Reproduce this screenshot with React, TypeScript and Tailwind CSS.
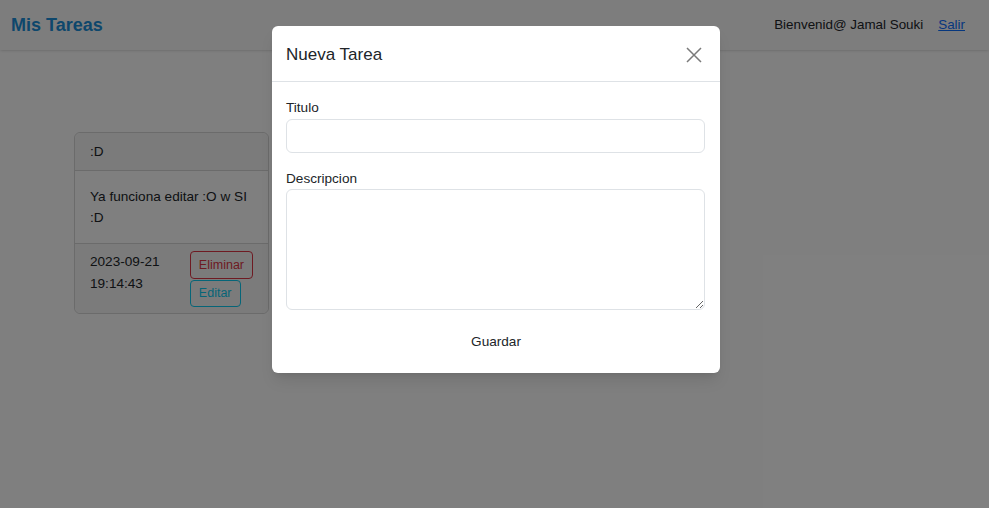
import React, { useState } from 'react';

const font = { fontFamily: '"Liberation Sans", Arial, sans-serif' };

const TaskCard: React.FC = () => (
  <div className="w-[195px] rounded-[6px] border border-[#d6d6d6] bg-white text-[13.6px] leading-[21px] text-[#212529]">
    <div className="h-[38px] px-[15px] flex items-center bg-[#f7f7f7] border-b border-[#d6d6d6] rounded-t-[6px]">:D</div>
    <div className="px-[15px] py-[15px] border-b border-[#d6d6d6]">Ya funciona editar :O w SI :D</div>
    <div className="flex px-[15px] pt-[7px] pb-[6px] bg-[#f7f7f7] rounded-b-[6px]">
      <div className="flex-1 leading-[22px]">2023-09-21 19:14:43</div>
      <div className="flex flex-col items-start shrink-0">
        <button className="h-[28px] px-[8px] rounded-[4px] border border-[#dc3545] text-[#dc3545] text-[12.5px] leading-none">Eliminar</button>
        <button className="mt-[1px] h-[27px] px-[8px] rounded-[4px] border border-[#0dcaf0] text-[#0dcaf0] text-[12.5px] leading-none">Editar</button>
      </div>
    </div>
  </div>
);

export default function App() {
  const [titulo, setTitulo] = useState('');
  const [descripcion, setDescripcion] = useState('');

  return (
    <div className="relative w-[989px] h-[508px] overflow-hidden bg-white" style={font}>
      {/* Navbar */}
      <div className="h-[50px] flex items-center justify-between pl-[11px] pr-[24px] bg-[#fbfbfb] shadow-sm">
        <span className="text-[18px] font-bold text-[#1c8fd8]">Mis Tareas</span>
        <div className="flex items-center gap-[15px] text-[13.4px] text-[#212529]">
          <span>Bienvenid@ Jamal Souki</span>
          <a href="#" className="text-[#0d6efd] underline">Salir</a>
        </div>
      </div>

      {/* Tasks */}
      <div className="pt-[82px] pl-[74px]">
        <TaskCard />
      </div>

      {/* Backdrop */}
      <div className="absolute inset-0 bg-black/50" />

      {/* Modal */}
      <div className="absolute left-[272px] top-[26px] w-[448px] bg-white rounded-[6px] shadow-lg text-[#212529]">
        <div className="h-[56px] flex items-center justify-between px-[14px] pt-[2px] border-b border-[#dee2e6]">
          <h2 className="text-[17px] leading-none">Nueva Tarea</h2>
          <button className="w-[20px] h-[20px] flex items-center justify-center mr-[2px] text-[#7a7a7a]">
            <svg width="16" height="16" viewBox="0 0 16 16" fill="none" stroke="currentColor" strokeWidth="1.5">
              <path d="M1 1 L15 15 M15 1 L1 15" />
            </svg>
          </button>
        </div>
        <div className="px-[14px] pt-[16px] pb-[14px] flex flex-col text-[13.6px]">
          <label className="leading-[20px] mb-[1px]">Titulo</label>
          <input
            value={titulo}
            onChange={e => setTitulo(e.target.value)}
            className="w-[419px] h-[34px] rounded-[6px] border border-[#dee2e6] px-[10px] outline-none"
          />
          <label className="mt-[16px] leading-[20px]">Descripcion</label>
          <textarea
            value={descripcion}
            onChange={e => setDescripcion(e.target.value)}
            className="w-[419px] h-[121px] rounded-[6px] border border-[#dee2e6] px-[10px] py-[6px] outline-none"
          />
          <button className="mt-[15px] h-[34px] self-center text-[13.6px] px-[12px]">Guardar</button>
        </div>
      </div>
    </div>
  );
}
